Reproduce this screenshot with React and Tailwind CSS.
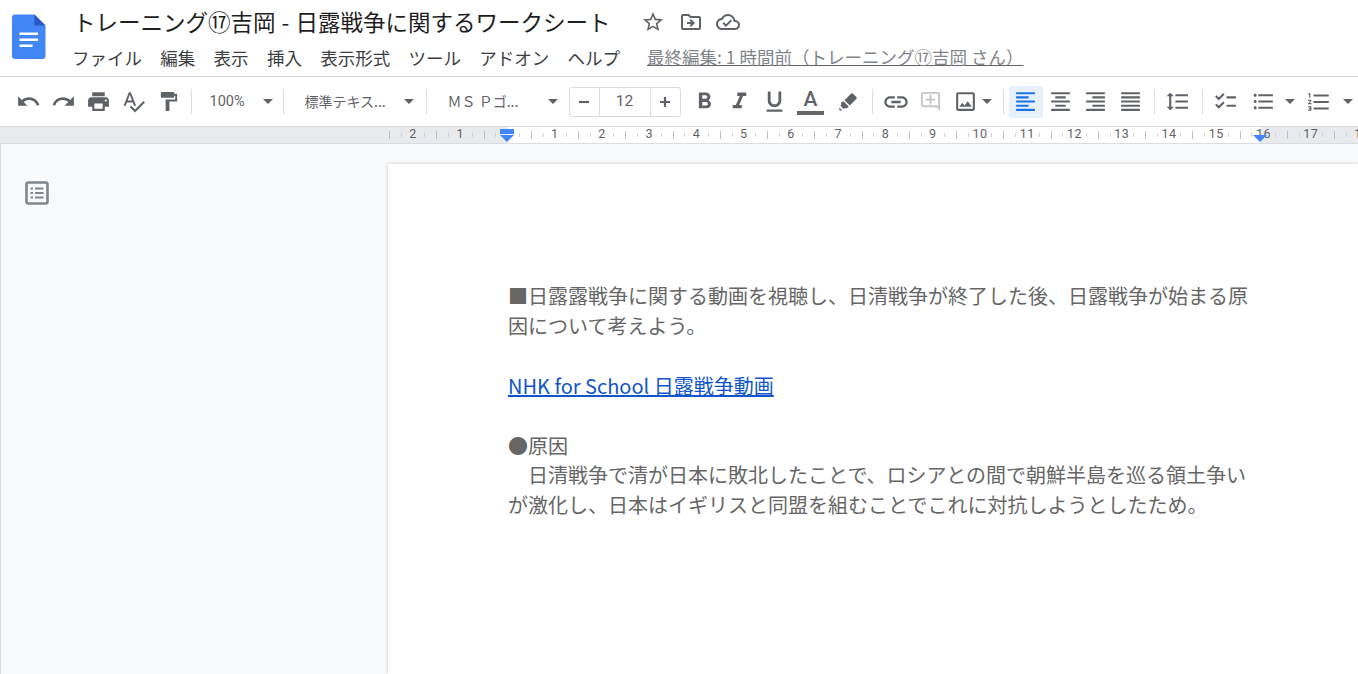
import React from 'react';
import {
  MdUndo, MdRedo, MdPrint, MdSpellcheck, MdFormatPaint, MdFormatBold, MdFormatItalic, MdFormatUnderlined,
  MdLink, MdOutlineAddComment, MdOutlineImage, MdFormatAlignLeft, MdFormatAlignCenter,
  MdFormatAlignRight, MdFormatAlignJustify, MdFormatLineSpacing, MdChecklist, MdFormatListBulleted,
  MdFormatListNumbered, MdStarBorder, MdOutlineDriveFileMove, MdOutlineCloudDone,
} from 'react-icons/md';

const jp = { fontFamily: '"Noto Sans CJK JP", "Noto Sans", sans-serif' };

const DocsLogo = () => (
  <svg width="34" height="46" viewBox="0 0 34 46">
    <path d="M3 0.5h19.5L33.5 11.5V42a3 3 0 0 1-3 3H3a3 3 0 0 1-3-3V3.5a3 3 0 0 1 3-3z" fill="#4285f4" />
    <path d="M22.5 0.5L33.5 11.5H24a1.5 1.5 0 0 1-1.5-1.5z" fill="#2a56c6" />
    <path d="M7.5 18.5h18.5v2.5H7.5zM7.5 24.5h18.5v2.5H7.5zM7.5 30.5h13v2.5h-13z" fill="#fff" />
  </svg>
);

const HighlightIcon = () => (
  <svg width="20" height="20" viewBox="0 0 20 20" fill="#5f6368">
    <path d="M13.2 1.6a1.2 1.2 0 0 1 1.7 0l3.5 3.5a1.2 1.2 0 0 1 0 1.7l-6.6 6.7-5.3-5.3z" />
    <path d="M5.4 9.3l5.3 5.3-1.6 1.6H6.6l-.9.9-3.4-3.4.9-.9v-2.5z" />
    <path d="M1.4 15.6l2.9 2.9H1.4z" />
  </svg>
);

const OutlineIcon = () => (
  <svg width="24" height="24" viewBox="0 0 24 24" fill="none">
    <rect x="1.5" y="1.5" width="21" height="21" rx="2" stroke="#80868b" strokeWidth="2.6" />
    <path d="M5.5 7.500h2.500M5.500 12h2.500M5.500 16.500h2.500M10 7.500h8.500M10 12h8.500M10 16.500h8.500" stroke="#80868b" strokeWidth="2.2" />
  </svg>
);

const MinusIcon = () => (
  <svg width="12" height="12" viewBox="0 0 12 12"><path d="M1 6h10" stroke="#5f6368" strokeWidth="2.2" /></svg>
);

const PlusIcon = () => (
  <svg width="12" height="12" viewBox="0 0 12 12"><path d="M1 6h10M6 1v10" stroke="#5f6368" strokeWidth="2.2" /></svg>
);

const Caret = ({ className = '' }) => (
  <span className={`w-0 h-0 border-x-[5px] border-x-transparent border-t-[5px] border-t-[#5f6368] shrink-0 ${className}`} />
);

const Sep = ({ className = 'mx-[5px]' }) => <span className={`w-px h-[25px] bg-[#dadce0] shrink-0 ${className}`} />;

const Btn = ({ icon: Icon, size = 25, active, w = 'w-[35px]', color, className = '' }) => (
  <span className={`${w} h-[32px] flex items-center justify-center shrink-0 rounded-[3px] ${active ? 'bg-[#e8f0fe]' : ''} ${className}`}>
    <Icon size={size} color={active ? '#1a73e8' : color || '#5f6368'} />
  </span>
);

const TextColorIcon = () => (
  <span className="w-[35px] h-[32px] ml-px flex flex-col items-center justify-center shrink-0">
    <span className="text-[21px] leading-[21px] font-medium text-[#5f6368]" style={{ fontFamily: 'Roboto, sans-serif' }}>A</span>
    <span className="w-[27px] h-[4px] bg-[#666666] mt-[1px]" />
  </span>
);

const RulerCell = ({ n }) => (
  <div className="w-[47.25px] h-[8px] shrink-0 flex items-center justify-center border-l border-[#bdc1c6]">
    <span className="w-px h-[4px] bg-[#d0d3d6]" />
    <span className="w-[22.5px] text-center text-[12.5px] leading-none text-[#5f6368] tracking-[0.5px]" style={{ fontFamily: 'Roboto, sans-serif' }}>{n}</span>
    <span className="w-px h-[4px] bg-[#d0d3d6]" />
  </div>
);

const rulerNumbers = [2, 1, '', 1, 2, 3, 4, 5, 6, 7, 8, 9, 10, 11, 12, 13, 14, 15, 16, 17, 1];

const menus = ['ファイル', '編集', '表示', '挿入', '表示形式', 'ツール', 'アドオン', 'ヘルプ'];

export default function App() {
  return (
    <div className="w-[1358px] h-[674px] overflow-hidden bg-white flex flex-col" style={jp}>
      {/* Header */}
      <header className="h-[77px] shrink-0 border-b border-[#dadce0] flex">
        <div className="w-[73px] shrink-0 pl-[12px] pt-[14px]">
          <DocsLogo />
        </div>
        <div className="flex-1 min-w-0">
          <div className="flex items-center h-[42px] pt-[1px]">
            <span className="text-[22.5px] leading-[30px] mt-[-2px] text-[#1f1f1f] whitespace-nowrap [word-spacing:1px]">トレーニング⑰吉岡 - 日露戦争に関するワークシート</span>
            <span className="flex items-center ml-[31px] gap-[13.5px]">
              <MdStarBorder size={24} color="#5f6368" />
              <MdOutlineDriveFileMove size={24} color="#5f6368" />
              <MdOutlineCloudDone size={24} color="#5f6368" />
            </span>
          </div>
          <div className="flex items-center h-[32px] whitespace-nowrap">
            <div className="flex gap-[18.3px] ml-[-1px] text-[17.5px] leading-[26px] text-[#3c4043]">
              {menus.map((m) => <span key={m}>{m}</span>)}
            </div>
            <span className="ml-[27px] mt-[-2px] text-[17.5px] leading-[26px] text-[#80868b] underline decoration-[#5f6368]">最終編集: 1 時間前（トレーニング⑰吉岡 さん）</span>
          </div>
        </div>
      </header>

      {/* Toolbar */}
      <div className="h-[49px] shrink-0 flex items-center pl-[10.5px] text-[#5f6368] whitespace-nowrap">
        <Btn icon={MdUndo} />
        <Btn icon={MdRedo} />
        <Btn icon={MdPrint} />
        <Btn icon={MdSpellcheck} />
        <Btn icon={MdFormatPaint} size={23} />
        <Sep />
        <span className="w-[82px] shrink-0 flex items-center pl-[13px] text-[14.5px]" style={{ fontFamily: 'Roboto, sans-serif' }}>
          100%<Caret className="ml-auto mr-[6px]" />
        </span>
        <Sep className="ml-[4px] mr-[5px]" />
        <span className="w-[132px] shrink-0 flex items-center pl-[16px] text-[14px]">
          標準テキス...<Caret className="ml-auto mr-[7px]" />
        </span>
        <Sep />
        <span className="w-[132px] shrink-0 flex items-center pl-[16px] text-[14px]">
          ＭＳ Ｐゴ...<Caret className="ml-auto mr-[6px]" />
        </span>
        <span className="ml-[5px] w-[112px] h-[30px] shrink-0 flex items-center border border-[#dadce0] rounded-[3px]">
          <span className="w-[30px] h-full flex items-center justify-center border-r border-[#dadce0]"><MinusIcon /></span>
          <span className="flex-1 text-center text-[15.5px]" style={{ fontFamily: 'Roboto, sans-serif' }}>12</span>
          <span className="w-[30px] h-full flex items-center justify-center border-l border-[#dadce0]"><PlusIcon /></span>
        </span>
        <Btn icon={MdFormatBold} size={27} className="ml-[6.5px]" />
        <Btn icon={MdFormatItalic} size={27} />
        <Btn icon={MdFormatUnderlined} size={27} />
        <TextColorIcon />
        <Btn icon={HighlightIcon} w="w-[40px]" />
        <Sep className="ml-[4px] mr-[5px]" />
        <Btn icon={MdLink} size={28} />
        <Btn icon={MdOutlineAddComment} size={23} color="#c4c7c5" />
        <Btn icon={MdOutlineImage} />
        <Caret className="ml-[-1px]" />
        <Sep className="ml-[11px] mr-[5px]" />
        <Btn icon={MdFormatAlignLeft} active w="w-[33.5px]" />
        <Btn icon={MdFormatAlignCenter} />
        <Btn icon={MdFormatAlignRight} />
        <Btn icon={MdFormatAlignJustify} />
        <Sep className="ml-[6px] mr-[5px]" />
        <Btn icon={MdFormatLineSpacing} />
        <Sep className="ml-[7px] mr-[5px]" />
        <Btn icon={MdChecklist} />
        <Btn icon={MdFormatListBulleted} className="ml-[3px]" />
        <Caret className="ml-[4px]" />
        <Btn icon={MdFormatListNumbered} size={26} className="ml-[7px]" />
        <Caret className="ml-[6px]" />
      </div>

      {/* Ruler */}
      <div className="relative h-[18px] shrink-0 flex items-center pb-px border-y border-[#dadce0] bg-[linear-gradient(to_right,#e8eaed_508px,#fff_508px,#fff_1260px,#e8eaed_1260px)] overflow-hidden">
        <div className="flex pl-[389px]">
          {rulerNumbers.map((n, i) => <RulerCell key={i} n={n} />)}
        </div>
        <span className="absolute left-[500px] top-[2px] w-[14px] h-[5px] bg-[#4285f4]" />
        <span className="absolute left-[500px] top-[8px] w-0 h-0 border-x-[7px] border-x-transparent border-t-[7px] border-t-[#4285f4]" />
        <span className="absolute left-[1253px] top-[8px] w-0 h-0 border-x-[7px] border-x-transparent border-t-[7px] border-t-[#4285f4]" />
      </div>

      {/* Canvas */}
      <div className="flex-1 min-h-0 flex bg-[#f8f9fa] border-l border-[#dadce0] overflow-hidden">
        <div className="w-[387px] shrink-0 pl-[23.5px] pt-[37px]">
          <OutlineIcon />
        </div>
        <div className="flex-1 mt-[20px] bg-white shadow-[0_0_3px_rgba(60,64,67,0.25)] pl-[120px] pt-[117px]">
          <div className="w-[742px] text-[20px] text-[#666666]">
            <p className="leading-[30px]">■日露露戦争に関する動画を視聴し、日清戦争が終了した後、日露戦争が始まる原因について考えよう。</p>
            <p className="h-[30px]" />
            <p className="leading-[30px]"><a className="text-[#1155cc] underline" href="#link">NHK for School 日露戦争動画</a></p>
            <p className="h-[30px]" />
            <p className="leading-[29px]">●原因</p>
            <p className="leading-[30px]">　日清戦争で清が日本に敗北したことで、ロシアとの間で朝鮮半島を巡る領土争いが激化し、日本はイギリスと同盟を組むことでこれに対抗しようとしたため。</p>
          </div>
        </div>
      </div>
    </div>
  );
}
